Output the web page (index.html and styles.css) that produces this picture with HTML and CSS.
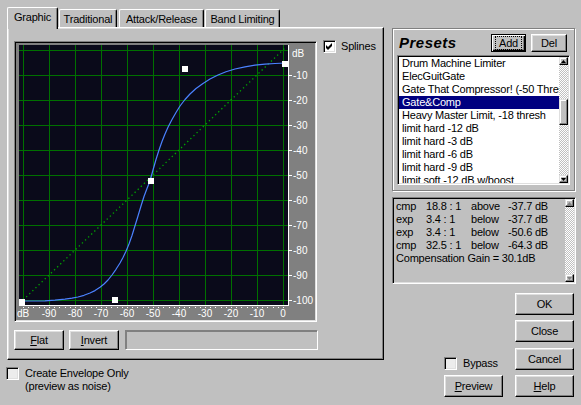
FILE: index.html
```html
<!DOCTYPE html>
<html lang="en">
<head>
    <meta charset="UTF-8">
    <title>Dynamics Processing</title>
    <link rel="stylesheet" href="styles.css">
</head>
<body>
    <div class="dialog">
        <div class="left">
            <div class="tabs">
                <div class="tab active tab-graphic">Graphic</div>
                <div class="tab tab-trad">Traditional</div>
                <div class="tab tab-attack">Attack/Release</div>
                <div class="tab tab-band">Band Limiting</div>
            </div>
            <div class="tab-panel">
                <div class="graph-col">
                    <div class="graph-frame">
                        <svg class="graph" width="301" height="279" viewBox="15 42 301 279">
                            <rect x="19" y="45" width="269" height="260" fill="#0a0a1a"/>
                            <g stroke="#007000" shape-rendering="crispEdges">
                                <path d="M23.5 45V305M49.5 45V305M75.5 45V305M101.5 45V305M127.5 45V305M153.5 45V305M179.5 45V305M205.5 45V305M231.5 45V305M257.5 45V305M283.5 45V305"/>
                                <path d="M19 50.5H288M19 75.5H288M19 100.5H288M19 125.5H288M19 150.5H288M19 175.5H288M19 200.5H288M19 225.5H288M19 250.5H288M19 275.5H288M19 300.5H288"/>
                            </g>
                            <line x1="20" y1="303" x2="286" y2="47" stroke="#00a800" stroke-width="1.3" stroke-dasharray="1.3 3"/>
                            <g stroke="#fff" shape-rendering="crispEdges">
                                <path d="M288.5 45V306M19 305.5H289"/>
                                <path d="M289 75.5h3M289 100.5h3M289 125.5h3M289 150.5h3M289 175.5h3M289 200.5h3M289 225.5h3M289 250.5h3M289 275.5h3M289 300.5h3"/>
                                <line x1="23" y1="307.5" x2="285" y2="307.5" stroke-dasharray="1 4.2"/>
                            </g>
                            <polyline fill="none" stroke="#4b82ff" stroke-width="1.2" stroke-linejoin="round" points="21,301 35,301 45,300.8 55,300.2 65,299.2 72,298.2 78,297 84,295.3 90,293 95,290.6 100,287.3 104,284 108,280 112,275 116,269.3 120,263 123,257.5 126,251.2 129,244 132,235.5 135,225.8 138,216 141,206 144,196.5 147,188.5 150,181 153,170 156,159.5 159,150 162,141.5 165,134 168,127.3 172,119.5 176,112.5 180,106 185,99.5 190,94 196,88.5 203,83.5 210,79 218,75 226,71.8 235,69 245,66.8 255,65.2 265,64.2 275,63.5 286,63"/>
                            <g fill="#fff" shape-rendering="crispEdges">
                                <rect x="19" y="299" width="6" height="7"/>
                                <rect x="112" y="297" width="6" height="6"/>
                                <rect x="148" y="178" width="6" height="6"/>
                                <rect x="182" y="66" width="6" height="6"/>
                                <rect x="282" y="61" width="6" height="6"/>
                            </g>
                            <g class="axis-label" fill="#fff">
                                <text x="292" y="57">dB</text>
                                <text x="293" y="79">-10</text>
                                <text x="293" y="104">-20</text>
                                <text x="293" y="129">-30</text>
                                <text x="293" y="154">-40</text>
                                <text x="293" y="179">-50</text>
                                <text x="293" y="204">-60</text>
                                <text x="293" y="229">-70</text>
                                <text x="293" y="254">-80</text>
                                <text x="293" y="279">-90</text>
                                <text x="293" y="304">-100</text>
                            </g>
                            <g class="axis-label" fill="#fff" text-anchor="middle">
                                <text x="23" y="317">dB</text>
                                <text x="49" y="317">-90</text>
                                <text x="75" y="317">-80</text>
                                <text x="101" y="317">-70</text>
                                <text x="127" y="317">-60</text>
                                <text x="153" y="317">-50</text>
                                <text x="179" y="317">-40</text>
                                <text x="205" y="317">-30</text>
                                <text x="231" y="317">-20</text>
                                <text x="257" y="317">-10</text>
                                <text x="283" y="317">0</text>
                            </g>
                        </svg>
                    </div>
                    <div class="graph-buttons">
                        <button class="btn btn-small"><u>F</u>lat</button>
                        <button class="btn btn-small"><u>I</u>nvert</button>
                        <div class="field"></div>
                    </div>
                </div>
                <div class="check splines">
                    <span class="box">
                        <svg width="7" height="7" viewBox="0 0 7 7"><path d="M0 2L2 4L6 0V3L2 7L0 5Z" fill="#000"/></svg>
                    </span>
                    <span>Splines</span>
                </div>
            </div>
            <div class="check envelope">
                <span class="box box-off"></span>
                <span class="check-text">Create Envelope Only<br>(preview as noise)</span>
            </div>
        </div>

        <div class="right">
            <div class="presets">
                <div class="presets-head">
                    <span class="presets-title">Presets</span>
                    <button class="btn btn-default btn-add"><span class="focus">Add</span></button>
                    <button class="btn btn-del">Del</button>
                </div>
                <div class="listbox">
                    <ul class="items">
                        <li>Drum Machine Limiter</li>
                        <li>ElecGuitGate</li>
                        <li>Gate That Compressor! (-50 Thresh)</li>
                        <li class="selected">Gate&amp;Comp</li>
                        <li>Heavy Master Limit, -18 thresh</li>
                        <li>limit hard -12 dB</li>
                        <li>limit hard -3 dB</li>
                        <li>limit hard -6 dB</li>
                        <li>limit hard -9 dB</li>
                        <li>limit soft -12 dB w/boost</li>
                        <li>limit soft -6 dB</li>
                    </ul>
                    <div class="scroll">
                        <div class="scroll-btn"><svg width="5" height="3" viewBox="0 0 5 3"><path d="M2.5 0L5 3H0Z"/></svg></div>
                        <div class="track"><div class="thumb"></div></div>
                        <div class="scroll-btn"><svg width="5" height="3" viewBox="0 0 5 3"><path d="M0 0H5L2.5 3Z"/></svg></div>
                    </div>
                </div>
            </div>

            <div class="info">
                <div class="info-text">
                    <div class="info-row"><span>cmp</span><span>18.8 : 1</span><span>above</span><span>-37.7 dB</span></div>
                    <div class="info-row"><span>exp</span><span>3.4 : 1</span><span>below</span><span>-37.7 dB</span></div>
                    <div class="info-row"><span>exp</span><span>3.4 : 1</span><span>below</span><span>-50.6 dB</span></div>
                    <div class="info-row"><span>cmp</span><span>32.5 : 1</span><span>below</span><span>-64.3 dB</span></div>
                    <div class="info-total">Compensation Gain = 30.1dB</div>
                </div>
                <div class="scroll scroll-info">
                    <div class="scroll-btn"><svg width="5" height="3" viewBox="0 0 5 3"><path d="M2.5 0L5 3H0Z"/></svg></div>
                    <div class="track"></div>
                    <div class="scroll-btn"><svg width="5" height="3" viewBox="0 0 5 3"><path d="M0 0H5L2.5 3Z"/></svg></div>
                </div>
            </div>

            <div class="actions">
                <div class="preview-col">
                    <div class="check bypass">
                        <span class="box box-off"></span>
                        <span>Bypass</span>
                    </div>
                    <button class="btn btn-big"><u>P</u>review</button>
                </div>
                <div class="button-col">
                    <button class="btn btn-big">OK</button>
                    <button class="btn btn-big">Close</button>
                    <button class="btn btn-big btn-cancel">Cancel</button>
                    <button class="btn btn-big"><u>H</u>elp</button>
                </div>
            </div>
        </div>
    </div>
</body>
</html>
```

FILE: styles.css
```css
body {
    margin: 0;
    background-color: #c0c0c0;
    font-family: "Liberation Sans", Arial, sans-serif;
    font-size: 11px;
    letter-spacing: -0.2px;
    color: #000;
}
.dialog {
    display: flex;
    gap: 8px;
    width: 581px;
    height: 405px;
    box-sizing: border-box;
    padding: 7px 0 0 7px;
}

/* left side: tab control */
.left {
    width: 377px;
}
.tabs {
    display: flex;
    align-items: flex-end;
    height: 20px;
    position: relative;
    z-index: 1;
}
.tab {
    box-sizing: border-box;
    height: 18px;
    padding-top: 3px;
    line-height: 13px;
    text-align: center;
    white-space: nowrap;
    background-color: #c0c0c0;
    border-top: 1px solid #fff;
    border-left: 1px solid #fff;
    border-right: 1px solid #000;
    border-radius: 2px 2px 0 0;
    box-shadow: inset -1px 0 #808080;
}
.tab.active {
    height: 22px;
    margin-bottom: -2px;
}
.tab-graphic { width: 51px; margin-right: 1px; }
.tab-trad { width: 58px; margin-right: 2px; }
.tab-attack { width: 85px; margin-right: 1px; }
.tab-band { width: 75px; }
.tab-panel {
    position: relative;
    box-sizing: border-box;
    height: 333px;
    display: flex;
    align-items: flex-start;
    padding: 13px 0 0 6px;
    border: 1px solid;
    border-color: #fff #000 #000 #fff;
    box-shadow: inset -1px -1px #808080, inset 1px 1px #dfdfdf;
}
.graph-frame {
    width: 303px;
    height: 281px;
    box-sizing: border-box;
    background-color: #808080;
    border: 1px solid;
    border-color: #808080 #fff #fff #808080;
    box-shadow: inset 1px 1px #000, inset -1px -1px #dfdfdf;
}
.graph {
    display: block;
}
.axis-label {
    font-family: "Liberation Sans", Arial, sans-serif;
    font-size: 10px;
    letter-spacing: 0;
}
.graph-buttons {
    display: flex;
    margin-top: 8px;
}
.btn {
    font: inherit;
    letter-spacing: inherit;
    color: #000;
    background-color: #c0c0c0;
    padding: 0;
    box-sizing: border-box;
    border: 1px solid;
    border-color: #fff #000 #000 #fff;
    box-shadow: inset -1px -1px #808080, inset 1px 1px #dfdfdf;
}
.btn-small {
    width: 50px;
    height: 20px;
    margin-right: 5px;
}
.field {
    width: 193px;
    height: 20px;
    margin-left: 1px;
    box-sizing: border-box;
    border: 1px solid;
    border-color: #808080 #fff #fff #808080;
    box-shadow: inset 1px 1px #808080;
}

/* checkboxes */
.check {
    display: flex;
    align-items: center;
    gap: 6px;
    line-height: 13px;
}
.box {
    width: 13px;
    height: 13px;
    flex: none;
    box-sizing: border-box;
    display: flex;
    align-items: center;
    justify-content: center;
    background-color: #fff;
    border: 1px solid;
    border-color: #808080 #fff #fff #808080;
    box-shadow: inset 1px 1px #000, inset -1px -1px #dfdfdf;
}
.box-off {
    background-color: #ececec;
}
.splines {
    margin: -1px 0 0 5px;
    gap: 5px;
}
.envelope {
    align-items: flex-start;
    margin: 7px 0 0 -1px;
}

/* right side */
.right {
    width: 184px;
    padding-top: 21px;
    display: flex;
    flex-direction: column;
}
.presets {
    width: 183px;
    height: 163px;
    box-sizing: border-box;
    padding: 5px 0 0 4px;
    border: 1px solid #808080;
    box-shadow: inset 1px 1px #fff, 1px 1px #fff;
}
.presets-head {
    display: flex;
    align-items: center;
    height: 18px;
}
.presets-title {
    font-size: 15px;
    font-weight: bold;
    font-style: italic;
    letter-spacing: 0.5px;
    line-height: 18px;
    margin-left: 2px;
    width: 92px;
}
.btn-add {
    width: 35px;
    height: 18px;
    margin-right: 5px;
}
.btn-default {
    border-color: #000;
    box-shadow: inset 1px 1px #fff, inset -1px -1px #000, inset -2px -2px #808080;
}
.focus {
    display: inline-block;
    border: 1px dotted #000;
    line-height: 12px;
    padding: 0 3px;
}
.btn-del {
    width: 36px;
    height: 18px;
}
.listbox {
    display: flex;
    width: 173px;
    height: 130px;
    margin-top: 3px;
    box-sizing: border-box;
    padding: 1px;
    background-color: #fff;
    border: 1px solid;
    border-color: #808080 #fff #fff #808080;
    box-shadow: inset 1px 1px #000, inset -1px -1px #dfdfdf;
}
.items {
    list-style: none;
    margin: 0;
    padding: 0;
    flex: 1;
    overflow: hidden;
}
.items li {
    height: 13px;
    line-height: 13px;
    padding-left: 3px;
    white-space: nowrap;
}
.items li.selected {
    background-color: #000080;
    color: #fff;
}
.scroll {
    width: 9px;
    display: flex;
    flex-direction: column;
}
.scroll-btn {
    height: 8px;
    box-sizing: border-box;
    display: flex;
    align-items: center;
    justify-content: center;
    background-color: #c0c0c0;
    border: 1px solid;
    border-color: #dfdfdf #000 #000 #dfdfdf;
    box-shadow: inset -1px -1px #808080, inset 1px 1px #fff;
}
.scroll-btn svg {
    display: block;
}
.track {
    flex: 1;
    background: repeating-conic-gradient(#c0c0c0 0 25%, #fff 0 50%) 0 0 / 2px 2px;
}
.thumb {
    height: 26px;
    margin-top: 34px;
    box-sizing: border-box;
    background-color: #c0c0c0;
    border: 1px solid;
    border-color: #dfdfdf #000 #000 #dfdfdf;
    box-shadow: inset -1px -1px #808080, inset 1px 1px #fff;
}

.info {
    display: flex;
    width: 184px;
    height: 87px;
    margin-top: 6px;
    box-sizing: border-box;
    padding: 1px;
    border: 1px solid;
    border-color: #808080 #fff #fff #808080;
    box-shadow: inset 1px 1px #000, inset -1px -1px #dfdfdf;
}
.info-text {
    flex: 1;
    padding: 1px 0 0 2px;
    line-height: 13px;
}
.info-row {
    display: grid;
    grid-template-columns: 30px 45px 37px auto;
}
.scroll-info .scroll-btn svg {
    fill: #808080;
}

.actions {
    display: flex;
    justify-content: flex-end;
    align-items: flex-end;
    gap: 12px;
    padding-right: 2px;
    margin-top: 9px;
}
.preview-col {
    display: flex;
    flex-direction: column;
    gap: 5px;
}
.button-col {
    display: flex;
    flex-direction: column;
    gap: 5px;
}
.btn-big {
    width: 59px;
    height: 22px;
}
.btn-cancel {
    margin-top: 1px;
}
```
